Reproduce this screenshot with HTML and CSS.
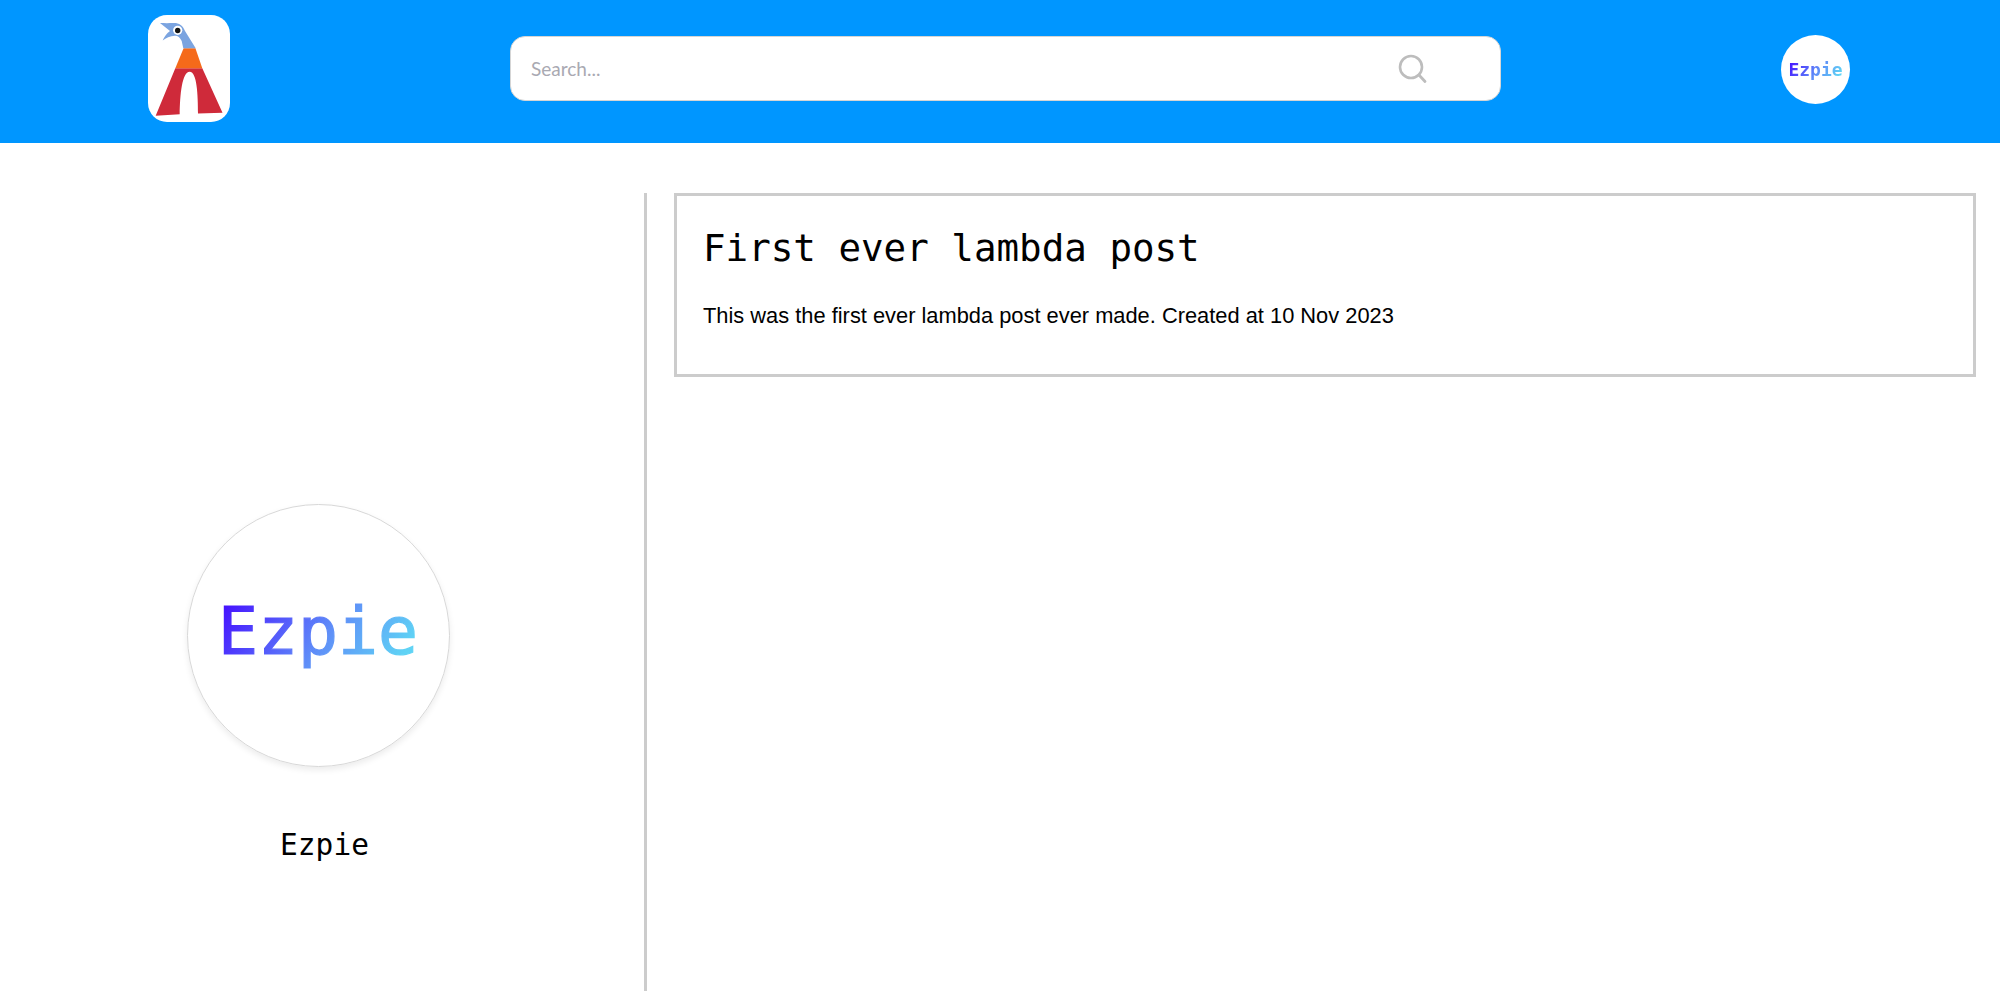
FILE: index.html
```html
<!DOCTYPE html>
<html lang="en">
<head>
<meta charset="utf-8">
<title>Ezpie</title>
<link rel="stylesheet" href="styles.css">
</head>
<body>
<header class="topbar">
  <a class="logo" href="#">
    <svg viewBox="0 0 82 107" width="82" height="107" aria-label="Logo">
      <rect width="82" height="107" rx="19" fill="#fff"/>
      <path d="M27.3 53.3H54.3L74.5 97.8 50 98.5C50 80 49 56.7 41.7 56.7 34 56.7 32 80 31.7 99.2L7.7 100.8Z" fill="#cf2a3a"/>
      <path d="M35.6 33.3H47.4L54.3 53.3H27.3Z" fill="#f56a1a"/>
      <path d="M12 8C17 8.2 21 8.2 25 8 30 7.5 35 10 37 16L47.7 33.3H35.3L33.7 26C32 22.5 30 20.7 27 20.7 22 20.7 18 23 14.7 25.5 16 22 18.5 18.5 22 16Z" fill="#7ba4e0"/>
      <circle cx="29.7" cy="15.3" r="4.6" fill="#fff"/>
      <circle cx="29.7" cy="15.5" r="2.7" fill="#111"/>
    </svg>
  </a>
  <form class="search">
    <input class="search-input" type="text" placeholder="Search...">
    <svg class="search-icon" viewBox="0 0 30 30" width="30" height="30" aria-hidden="true">
      <circle cx="13" cy="13" r="11" fill="none" stroke="#bdbdbd" stroke-width="2.6"/>
      <path d="M21 21L27 27.5" fill="none" stroke="#bdbdbd" stroke-width="2.8" stroke-linecap="round"/>
    </svg>
  </form>
  <a class="user-badge" href="#"><span class="grad-text">Ezpie</span></a>
</header>
<main class="page">
  <aside class="profile">
    <div class="profile-avatar"><span class="grad-text">Ezpie</span></div>
    <div class="profile-name">Ezpie</div>
  </aside>
  <section class="posts">
    <article class="post">
      <h1 class="post-title">First ever lambda post</h1>
      <p class="post-body">This was the first ever lambda post ever made. Created at 10 Nov 2023</p>
    </article>
  </section>
</main>
</body>
</html>
```

FILE: styles.css
```css
* { box-sizing: border-box; }

html, body { height: 100%; }

body {
  margin: 0;
  background: #fff;
  color: #000;
  font-family: "Liberation Sans", Arial, sans-serif;
  overflow: hidden;
}

.topbar {
  display: flex;
  align-items: center;
  justify-content: space-between;
  height: 143px;
  padding: 0 150px 0 148px;
  background: #0096ff;
}

.logo { display: block; height: 107px; margin-top: -6px; }
.logo svg { display: block; }

.search {
  display: flex;
  align-items: center;
  width: 991px;
  height: 65px;
  margin-top: -6px;
  background: #fff;
  border: 1px solid #d5d5d5;
  border-radius: 15px;
}

.search-input {
  flex: 1;
  min-width: 0;
  height: 100%;
  padding: 0 20px;
  border: 0;
  background: transparent;
  outline: none;
  font-family: Lato, sans-serif;
  font-size: 19px;
}

.search-input::placeholder { color: #a9a9b2; opacity: 1; }

.search-icon { margin-right: 72px; }

.user-badge {
  display: flex;
  align-items: center;
  justify-content: center;
  width: 69px;
  height: 69px;
  margin-top: -4px;
  border-radius: 50%;
  background: #fff;
  font-family: "DejaVu Sans Mono", monospace;
  font-size: 18px;
  font-weight: 700;
  text-decoration: none;
}

.grad-text {
  background: linear-gradient(125deg, #4510ff 5%, #5f8ff8 55%, #5fd3f5 90%);
  -webkit-background-clip: text;
  background-clip: text;
  color: transparent;
}

.page {
  display: flex;
  height: calc(100% - 143px);
  padding: 50px 24px 0 0;
}

.profile {
  display: flex;
  flex-direction: column;
  align-items: center;
  flex: 0 0 647px;
  padding-top: 311px;
  border-right: 3px solid #ccc;
}

.profile-avatar {
  display: flex;
  align-items: center;
  justify-content: center;
  width: 263px;
  height: 263px;
  margin-right: 8px;
  padding-bottom: 10px;
  border: 1px solid #d8d8d8;
  border-radius: 50%;
  box-shadow: 0 3px 6px rgba(0, 0, 0, 0.08);
  font-family: "DejaVu Sans Mono", monospace;
  font-size: 66.5px;
  -webkit-text-stroke: 1.2px transparent;
}

.profile-name {
  margin-top: 61px;
  margin-left: 5px;
  font-family: "DejaVu Sans Mono", monospace;
  font-size: 29.5px;
}

.posts { flex: 1; padding-left: 27px; }

.post {
  height: 184px;
  padding: 30px 26px;
  border: 3px solid #ccc;
}

.post-title {
  margin: 0;
  font-family: "DejaVu Sans Mono", monospace;
  font-size: 37.5px;
  font-weight: 400;
  line-height: 44px;
}

.post-body {
  margin: 33px 0 0;
  font-size: 21.85px;
  line-height: 25px;
}
```
